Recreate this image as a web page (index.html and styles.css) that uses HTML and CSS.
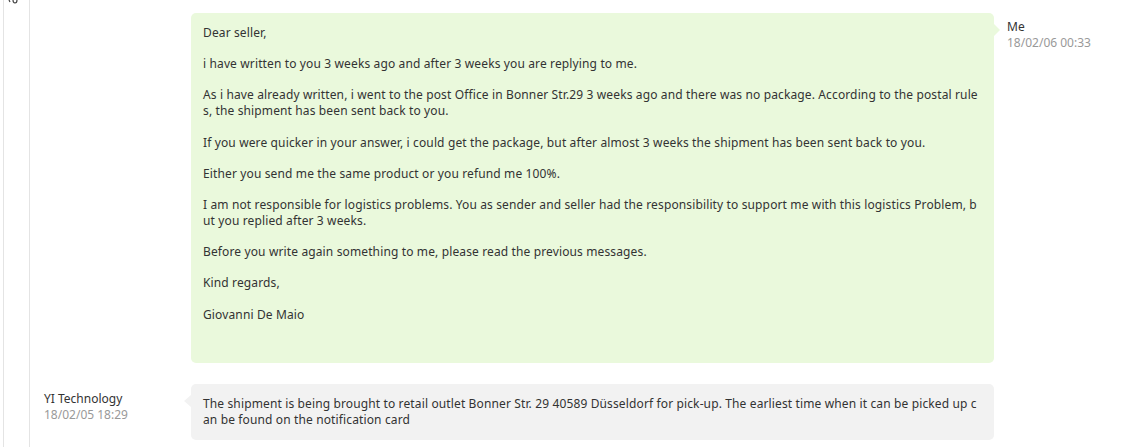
FILE: index.html
```html
<!DOCTYPE html>
<html>
<head>
<meta charset="utf-8">
<link rel="stylesheet" href="styles.css">
</head>
<body>
<div class="page">
  <aside class="rail">
    <svg class="rail-mark" width="10" height="4" viewBox="0 0 10 4"><path d="M1 0 L2 2 M5 0 Q5 3 7 3 Q9 3 9 0" stroke="#444" stroke-width="1.2" fill="none"/></svg>
  </aside>
  <main class="thread">
    <div class="msg msg-me">
      <div class="side"></div>
      <div class="bubble bubble-me">
        <p>Dear seller,</p>
        <p>i have written to you 3 weeks ago and after 3 weeks you are replying to me.</p>
        <p>As i have already written, i went to the post Office in Bonner Str.29 3 weeks ago and there was no package. According to the postal rules, the shipment has been sent back to you.</p>
        <p>If you were quicker in your answer, i could get the package, but after almost 3 weeks the shipment has been sent back to you.</p>
        <p>Either you send me the same product or you refund me 100%.</p>
        <p>I am not responsible for logistics problems. You as sender and seller had the responsibility to support me with this logistics Problem, but you replied after 3 weeks.</p>
        <p>Before you write again something to me, please read the previous messages.</p>
        <p>Kind regards,</p>
        <p>Giovanni De Maio</p>
      </div>
      <div class="side side-right">
        <div class="name">Me</div>
        <div class="time">18/02/06 00:33</div>
      </div>
    </div>
    <div class="msg msg-other">
      <div class="side side-left">
        <div class="name">YI Technology</div>
        <div class="time">18/02/05 18:29</div>
      </div>
      <div class="bubble bubble-other">
        <p>The shipment is being brought to retail outlet Bonner Str. 29 40589 Düsseldorf for pick-up. The earliest time when it can be picked up can be found on the notification card</p>
      </div>
      <div class="side"></div>
    </div>
  </main>
</div>
</body>
</html>
```

FILE: styles.css
```css
html, body {
  margin: 0;
  padding: 0;
  background: #ffffff;
}
body {
  font-family: "Noto Sans", "Liberation Sans", sans-serif;
  font-size: 12px;
  color: #333333;
  overflow: hidden;
  height: 447px;
}
.page {
  display: flex;
  height: 447px;
}
.rail {
  width: 25px;
  margin-left: 3px;
  border-left: 1px solid #e4e4e4;
  border-right: 1px solid #e4e4e4;
  flex: none;
  position: relative;
}
.rail-mark {
  position: absolute;
  left: 4px;
  top: 0;
  display: block;
}
.thread {
  flex: 1;
  padding-top: 13px;
}
.msg {
  display: grid;
  grid-template-columns: 161px 803px 1fr;
  margin-bottom: 21px;
}
.bubble {
  position: relative;
  border-radius: 5px;
  line-height: 16px;
  word-break: break-all;
  letter-spacing: 0.13px;
}
.bubble p {
  margin: 0 0 15.2px 0;
}
.bubble p:last-child {
  margin-bottom: 0;
}
.bubble-me {
  background: #eaf9dc;
  padding: 12px 12px 40px 12px;
}
.bubble-me::after {
  content: "";
  position: absolute;
  right: -6px;
  top: 11px;
  border-style: solid;
  border-width: 6px 0 6px 6px;
  border-color: transparent transparent transparent #eaf9dc;
}
.bubble-other {
  background: #f2f2f2;
  padding: 12px 12px 12px 12px;
}
.bubble-other::before {
  content: "";
  position: absolute;
  left: -7px;
  top: 11px;
  border-style: solid;
  border-width: 6px 7px 6px 0;
  border-color: transparent #f2f2f2 transparent transparent;
}
.side {
  line-height: 16px;
}
.side-right {
  padding-left: 13px;
  padding-top: 6px;
}
.side-left {
  padding-left: 14px;
  padding-top: 7px;
}
.name {
  color: #333333;
}
.time {
  color: #999999;
}
```
